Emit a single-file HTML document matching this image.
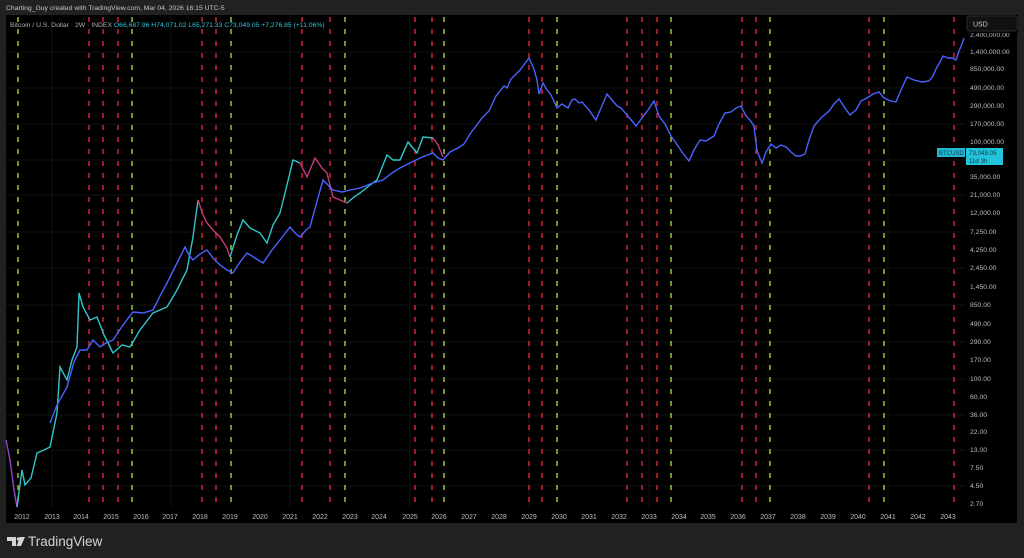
<!DOCTYPE html>
<html><head><meta charset="utf-8"><style>
html,body{margin:0;padding:0;background:#212121;width:1024px;height:558px;overflow:hidden}
svg{display:block}
text{font-family:"Liberation Sans",sans-serif}
</style></head><body>
<svg width="1024" height="558" viewBox="0 0 1024 558" xmlns="http://www.w3.org/2000/svg">
<rect width="1024" height="558" fill="#212121"/>
<text x="6" y="10" font-size="6.8" fill="#c8c8c8">Charting_Guy created with TradingView.com, Mar 04, 2026 16:15 UTC-5</text>
<rect x="6" y="15" width="1011" height="508" fill="#000"/>
<g stroke="#101010" stroke-width="1">
<line x1="6" y1="52" x2="965" y2="52"/><line x1="6" y1="88" x2="965" y2="88"/><line x1="6" y1="124" x2="965" y2="124"/><line x1="6" y1="160" x2="965" y2="160"/><line x1="6" y1="195" x2="965" y2="195"/><line x1="6" y1="232" x2="965" y2="232"/><line x1="6" y1="268" x2="965" y2="268"/><line x1="6" y1="305" x2="965" y2="305"/><line x1="6" y1="342" x2="965" y2="342"/><line x1="6" y1="379" x2="965" y2="379"/><line x1="6" y1="415" x2="965" y2="415"/><line x1="6" y1="450" x2="965" y2="450"/><line x1="6" y1="486" x2="965" y2="486"/>
<line x1="52" y1="15" x2="52" y2="508"/><line x1="171" y1="15" x2="171" y2="508"/><line x1="290" y1="15" x2="290" y2="508"/><line x1="410" y1="15" x2="410" y2="508"/><line x1="529" y1="15" x2="529" y2="508"/><line x1="649" y1="15" x2="649" y2="508"/><line x1="768" y1="15" x2="768" y2="508"/><line x1="888" y1="15" x2="888" y2="508"/>
</g>
<g stroke="#e3243b" stroke-width="1.4" stroke-dasharray="5 7">
<line x1="89" y1="17" x2="89" y2="508"/><line x1="103" y1="17" x2="103" y2="508"/><line x1="118" y1="17" x2="118" y2="508"/>
<line x1="202" y1="17" x2="202" y2="508"/><line x1="216" y1="17" x2="216" y2="508"/>
<line x1="302" y1="17" x2="302" y2="508"/><line x1="330" y1="17" x2="330" y2="508"/>
<line x1="415" y1="17" x2="415" y2="508"/><line x1="432" y1="17" x2="432" y2="508"/>
<line x1="529" y1="17" x2="529" y2="508"/><line x1="542" y1="17" x2="542" y2="508"/>
<line x1="627" y1="17" x2="627" y2="508"/><line x1="642" y1="17" x2="642" y2="508"/><line x1="657" y1="17" x2="657" y2="508"/>
<line x1="742" y1="17" x2="742" y2="508"/><line x1="756" y1="17" x2="756" y2="508"/>
<line x1="869" y1="17" x2="869" y2="508"/><line x1="954" y1="17" x2="954" y2="508"/>
</g>
<g stroke="#a5d63a" stroke-width="1.4" stroke-dasharray="5 7">
<line x1="18" y1="17" x2="18" y2="508"/><line x1="132" y1="17" x2="132" y2="508"/><line x1="231" y1="17" x2="231" y2="508"/><line x1="345" y1="17" x2="345" y2="508"/><line x1="444" y1="17" x2="444" y2="508"/><line x1="557" y1="17" x2="557" y2="508"/><line x1="671" y1="17" x2="671" y2="508"/><line x1="770" y1="17" x2="770" y2="508"/><line x1="884" y1="17" x2="884" y2="508"/>
</g>
<text x="10" y="27" font-size="6.8" fill="#b0b0b0">Bitcoin / U.S. Dollar · 2W · INDEX <tspan fill="#35c3d6">O66,687.96  H74,071.02  L65,271.33  C73,049.05  +7,276.85 (+11.06%)</tspan></text>
<polyline fill="none" stroke="#9b3fd0" stroke-width="1.4" points="6,440 10,460 14,490 17,507"/>
<polyline fill="none" stroke="#2fc6c9" stroke-width="1.4" points="17,507 22,470 25,485 31,478 37,453 44,450 50,447 57,413 60,367 67,380 72,360 77,347 79,293 83,307 90,320 97,317 104,335 110,347 113,353 122,345 130,347 140,330 153,313 167,307 177,290 187,270 193,237 198,200"/>
<polyline fill="none" stroke="#c23a7a" stroke-width="1.4" points="198,200 203,215 207,223 213,230 220,237 227,248 230,257"/>
<polyline fill="none" stroke="#2fc6c9" stroke-width="1.4" points="230,257 237,235 243,220 250,228 260,233 267,243 273,225 280,213 287,185 293,160 300,163"/>
<polyline fill="none" stroke="#c23a7a" stroke-width="1.4" points="300,163 307,177 315,158 322,168 327,173 333,197 340,200 347,203"/>
<polyline fill="none" stroke="#2fc6c9" stroke-width="1.4" points="347,203 354,197 360,193 370,185 377,180 383,165 387,155 393,160 400,160 408,142 417,153 423,137 433,138"/>
<polyline fill="none" stroke="#c23a7a" stroke-width="1.4" points="433,138 438,145 443,157"/>
<polyline fill="none" stroke="#4a63ff" stroke-width="1.4" points="50,423 57,405 67,387 74,362 80,350 87,350 93,340 100,347 106,343 113,340 123,325 133,312 143,313 153,310 160,296 167,283 176,265 185,247 189,255 193,260 200,254 207,250 213,258 220,265 227,270 233,273 240,262 247,253 255,258 263,263 272,250 280,240 290,227 295,233 300,237 306,230 310,227 316,205 323,180 328,185 333,190 342,192 350,190 360,188 370,184 383,180 392,173 400,168 410,163 420,158 433,153 438,158 443,160 450,152 458,148 464,144 470,134 476,126 482,118 489,111 496,96 504,86 507,88 511,79 520,70 529,58 534,69 537,80 539,94 543,83 547,90 551,95 557,108 562,104 568,108 572,100 575,99 579,103 582,102 589,110 596,120 601,108 607,94 612,100 617,106 621,108 627,115 632,121 636,126 642,118 648,110 654,101 659,116 665,124 671,136 676,143 682,152 689,161 694,150 700,140 706,141 714,136 719,124 725,113 731,112 736,108 741,106 746,116 750,120 754,126 757,151 762,163 766,152 771,144 776,148 781,145 786,147 791,152 796,156 800,156 805,154 809,140 814,126 821,118 829,111 834,104 839,99 845,108 850,115 856,110 861,101 867,98 873,94 879,92 883,97 886,99 891,101 896,102 901,90 907,77 914,80 922,82 929,81 933,76 936,69 940,62 943,56 948,58 952,58 956,60 959,51 962,44 964,38"/>
<g font-size="6.8" fill="#bdbdbd">
<text x="970" y="37">2,400,000.00</text>
<text x="970" y="54">1,400,000.00</text>
<text x="970" y="71">850,000.00</text>
<text x="970" y="90">490,000.00</text>
<text x="970" y="108">290,000.00</text>
<text x="970" y="126">170,000.00</text>
<text x="970" y="144">100,000.00</text>
<text x="970" y="179">35,000.00</text>
<text x="970" y="197">21,000.00</text>
<text x="970" y="215">12,000.00</text>
<text x="970" y="234">7,250.00</text>
<text x="970" y="252">4,250.00</text>
<text x="970" y="270">2,450.00</text>
<text x="970" y="289">1,450.00</text>
<text x="970" y="307">850.00</text>
<text x="970" y="326">490.00</text>
<text x="970" y="344">290.00</text>
<text x="970" y="362">170.00</text>
<text x="970" y="381">100.00</text>
<text x="970" y="399">60.00</text>
<text x="970" y="417">36.00</text>
<text x="970" y="434">22.00</text>
<text x="970" y="452">13.00</text>
<text x="970" y="470">7.50</text>
<text x="970" y="488">4.50</text>
<text x="970" y="506">2.70</text>
</g>
<rect x="968" y="15" width="50" height="18" fill="#000"/>
<rect x="967" y="16" width="50" height="15" rx="2" fill="#111" stroke="#2a2a2a"/>
<text x="973" y="26.5" font-size="7" fill="#d0d0d0">USD</text>
<rect x="937" y="148" width="28" height="9" fill="#22b8d4"/>
<text x="939" y="155" font-size="6" fill="#0a3a44">BTCUSD</text>
<rect x="966" y="148" width="37" height="17" fill="#22c4dc"/>
<text x="969" y="155" font-size="6.2" fill="#0a3a44">73,049.05</text>
<text x="969" y="163" font-size="6.2" fill="#0a3a44">11d 3h</text>
<g font-size="7" fill="#bdbdbd" text-anchor="middle">
<text x="22" y="519">2012</text><text x="52" y="519">2013</text><text x="81" y="519">2014</text><text x="111" y="519">2015</text><text x="141" y="519">2016</text><text x="170" y="519">2017</text><text x="200" y="519">2018</text><text x="230" y="519">2019</text><text x="260" y="519">2020</text><text x="290" y="519">2021</text><text x="320" y="519">2022</text><text x="350" y="519">2023</text><text x="379" y="519">2024</text><text x="410" y="519">2025</text><text x="439" y="519">2026</text><text x="469" y="519">2027</text><text x="499" y="519">2028</text><text x="529" y="519">2029</text><text x="559" y="519">2030</text><text x="589" y="519">2031</text><text x="619" y="519">2032</text><text x="649" y="519">2033</text><text x="679" y="519">2034</text><text x="708" y="519">2035</text><text x="738" y="519">2036</text><text x="768" y="519">2037</text><text x="798" y="519">2038</text><text x="828" y="519">2039</text><text x="858" y="519">2040</text><text x="888" y="519">2041</text><text x="918" y="519">2042</text><text x="948" y="519">2043</text>
</g>
<g fill="#d4d4d4">
<path d="M7,537 h9 v9 h-4 v-5 h-5 z"/>
<circle cx="18.5" cy="539" r="1.7"/>
<path d="M20,537 h5 l-4,9 h-4.5 z"/>
</g>
<text x="28" y="546" font-size="13.5" fill="#d4d4d4">TradingView</text>
</svg>
</body></html>
